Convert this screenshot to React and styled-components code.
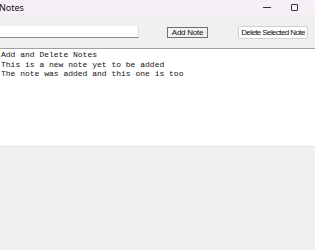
import React from "react";
import styled, { createGlobalStyle } from "styled-components";

const Global = createGlobalStyle`
  html, body { margin: 0; padding: 0; background: #f0f0f0; overflow: hidden; }
  #root { width: 315px; height: 250px; }
`;

const Window = styled.div`
  width: 315px;
  height: 250px;
  display: flex;
  flex-direction: column;
  background: #f0f0f0;
  overflow: hidden;
`;

const TitleBar = styled.div`
  height: 15px;
  flex: none;
  display: flex;
  align-items: center;
  background: #f6eff5;
  font-family: "Noto Sans", "Open Sans", sans-serif;
  font-size: 9px;
  color: #111;
`;

const Title = styled.span`
  margin-left: -1px;
  flex: 1;
  line-height: 15px;
`;

const Controls = styled.div`
  display: flex;
  align-items: center;
  gap: 20px;
  margin-right: 17px;
`;

const Minimize = styled.span`
  width: 8px;
  height: 1px;
  background: #333;
`;

const Maximize = styled.span`
  width: 5px;
  height: 5px;
  border: 1px solid #333;
  border-radius: 1px;
`;

const Toolbar = styled.div`
  height: 32px;
  flex: none;
  display: flex;
  align-items: center;
  padding-top: 1px;
  border-bottom: 1px solid #a0a0a0;
  background: #f0f0f0;
  font-family: "Liberation Sans", Arial, sans-serif;
  font-size: 8px;
`;

const NoteInput = styled.div`
  flex: none;
  width: 138px;
  height: 11px;
  background: #ffffff;
  border-bottom: 1px solid #8a8a8a;
  border-right: 1px solid #dcdcdc;
  margin-right: 28px;
`;

const Button = styled.div`
  flex: none;
  box-sizing: border-box;
  width: ${(p) => p.$w}px;
  height: ${(p) => (p.$modern ? "13px" : "11px")};
  display: flex;
  align-items: center;
  justify-content: center;
  background: ${(p) => (p.$modern ? "#ffffff" : "#f3f3f3")};
  border: 1px solid ${(p) => (p.$modern ? "#d0d0d0" : "#707070")};
  border-radius: ${(p) => (p.$modern ? "2px" : "0")};
  color: #111;
  letter-spacing: ${(p) => p.$ls ?? -0.25}px;
  white-space: nowrap;
  margin-left: ${(p) => p.$gap || 0}px;
`;

const TextArea = styled.div`
  height: 98px;
  flex: none;
  background: #ffffff;
  border-bottom: 1px solid #e4e4e4;
  padding: 1px 0 0 1px;
  box-sizing: border-box;
  font-family: "Liberation Mono", "Courier New", monospace;
  font-size: 8px;
  line-height: 9.7px;
  color: #111;
  white-space: pre;
`;

const Rest = styled.div`
  flex: 1;
  background: #f0f0f0;
`;

const lines = [
  "Add and Delete Notes",
  "This is a new note yet to be added",
  "The note was added and this one is too",
];

export default function App() {
  return (
    <Window>
      <Global />
      <TitleBar>
        <Title>Notes</Title>
        <Controls>
          <Minimize />
          <Maximize />
        </Controls>
      </TitleBar>
      <Toolbar>
        <NoteInput />
        <Button $w={41}>Add Note</Button>
        <Button $modern $w={70} $gap={30} $ls={-0.6}>Delete Selected Note</Button>
      </Toolbar>
      <TextArea>
        {lines.map((l) => (
          <div key={l}>{l}</div>
        ))}
      </TextArea>
      <Rest />
    </Window>
  );
}
